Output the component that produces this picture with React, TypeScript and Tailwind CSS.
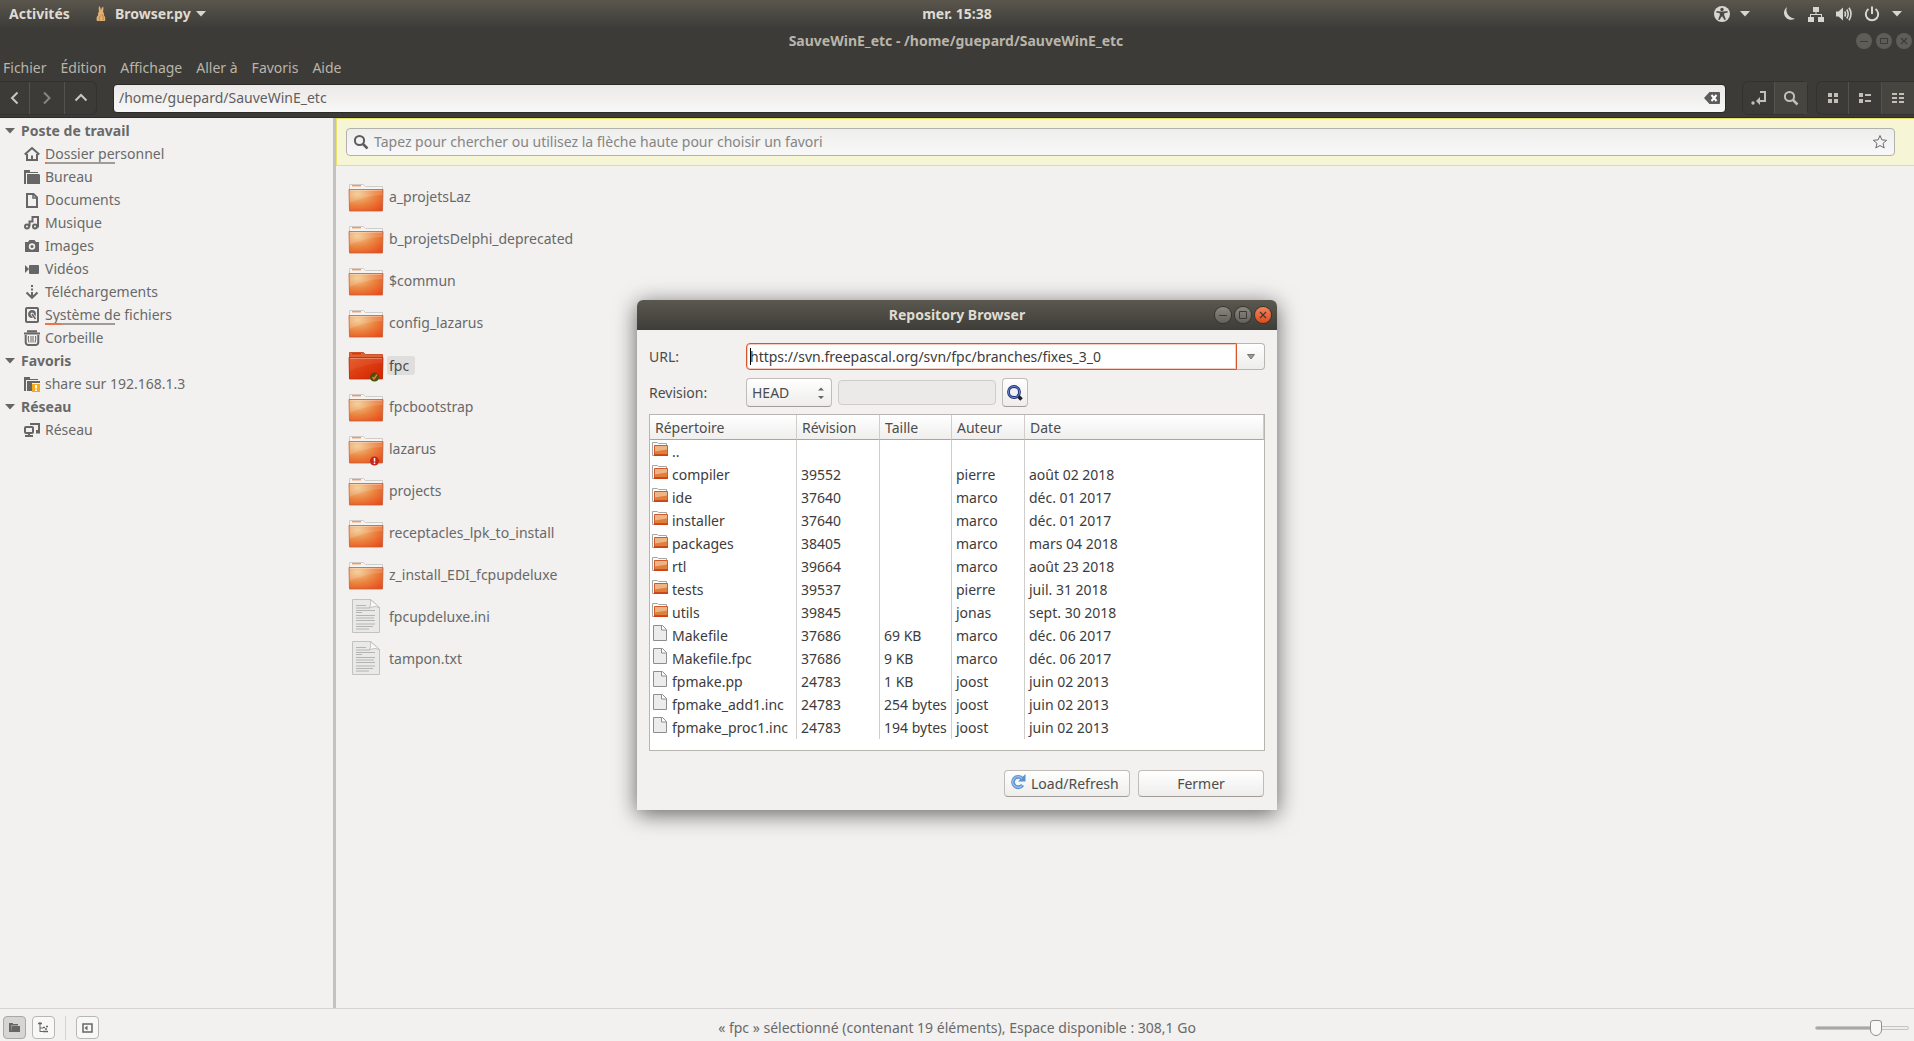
import type { ReactNode } from 'react';

interface Place {
  label: string;
  icon: ReactNode;
  // width in px of the used part of the disk bar
  used?: number;
}

interface RepoEntry {
  name: string;
  revision?: string;
  size?: string;
  author?: string;
  date?: string;
  file?: boolean;
}

const svgProps = { width: 16, height: 16, viewBox: '0 0 16 16', className: 'shrink-0' };

/* ---------- Sidebar icons ---------- */

const HomeIcon = () => (
  <svg {...svgProps} fill="none" stroke="#666" strokeWidth="2">
    <path d="M.7 8.500 8 2l7.300 6.500" />
    <path d="M3 8v6h10V8" />
    <path d="M8 14V9.500" />
  </svg>
);

const DesktopIcon = () => (
  <svg {...svgProps} fill="#666">
    <path d="M0 1h6v2h8v1H2v11H0z" />
    <path d="M3 5h12l1 1v9H3z" />
  </svg>
);

const DocumentIcon = () => (
  <svg {...svgProps} fill="none" stroke="#666" strokeWidth="2">
    <path d="M3 2h6.500L13 5.500V15H3z" />
    <path d="M9 1.500V6h4.500" strokeWidth="1.500" />
  </svg>
);

const MusicIcon = () => (
  <svg {...svgProps} fill="none" stroke="#666" strokeWidth="2">
    <circle cx="3" cy="11.500" r="2" />
    <circle cx="11" cy="11.500" r="2" />
    <path d="M5.500 11.500V6.500h3V2H14v9.500h-1" />
  </svg>
);

const CameraIcon = () => (
  <svg {...svgProps} fill="#666">
    <path d="M1 4h3l1.500-2h5L12 4h3v10H1z" />
    <circle cx="8" cy="8.500" r="3.200" fill="#f2f1f0" />
    <circle cx="8" cy="8.500" r="1.500" />
  </svg>
);

const VideoIcon = () => (
  <svg {...svgProps} fill="#666">
    <path d="M1 4v8l4-4z" />
    <rect x="5" y="4" width="10" height="9" rx="1" />
  </svg>
);

const DownloadIcon = () => (
  <svg {...svgProps} fill="none" stroke="#666" strokeWidth="2">
    <path d="M8 1v2M8 4.500v2M8 8v5" />
    <path d="M2.500 8.500 8 13.800l5.500-5.300" />
  </svg>
);

const DiskIcon = () => (
  <svg {...svgProps} fill="none" stroke="#666" strokeWidth="2">
    <rect x="2" y="1" width="12" height="14" rx="1" />
    <circle cx="8" cy="7" r="2.700" strokeWidth="2.400" />
    <path d="m8 7 3.500 5" stroke="#f2f1f0" strokeWidth="3" />
    <path d="m8 7 3.500 5" strokeWidth="1.600" />
  </svg>
);

const TrashIcon = () => (
  <svg {...svgProps} fill="none" stroke="#666" strokeWidth="1.500">
    <path d="M0 3.500h16M3 1.200h10" strokeWidth="2" />
    <path d="M1.700 5v7.500Q2 15 4.500 15h7q2.500 0 2.800-2.500V5" strokeWidth="2" />
    <path d="M4.500 6q-.8 3 .5 6.500M7 6v6.500M9 6v6.500M11.500 6q.8 3-.5 6.500" strokeWidth="1" />
  </svg>
);

const ShareIcon = () => (
  <svg {...svgProps} fill="#666">
    <path d="M0 1h6v2h8v1H2v11H0z" />
    <path d="M3 5h13v2H8v8H3z" />
    <path d="M8 8h8v8H8z" fill="#f5a91c" />
    <path d="M11 9h2v3.500h-2zM11 13.500h2V15h-2z" fill="#fff" />
  </svg>
);

const NetworkPlaceIcon = () => (
  <svg {...svgProps} fill="none" stroke="#666" strokeWidth="2">
    <path d="M7 3V2h8v7h-3" />
    <rect x="1" y="5" width="8" height="6" rx="1" />
    <path d="M1 14h8M12 10.500h4M5 11v3" />
  </svg>
);

/* ---------- Small glyphs ---------- */

const Caret = ({ color = '#d8d6d0' }: { color?: string }) => (
  <svg width="10" height="6" viewBox="0 0 10 6" className="shrink-0">
    <path d="M0 0h10L5 5.500z" fill={color} />
  </svg>
);

const RabbitIcon = () => (
  <svg width="10" height="16" viewBox="0 0 10 16">
    <path
      d="M3.300 0C4.500 1 4.800 3 5 4.500 5.300 3 5.800 1.200 7.300.8 7.700 3 7.200 4.500 7 6c1.200 1 1.200 2.200.8 3C9.200 10.500 9.700 12.500 9 15H1C0 13 .5 10.500 2.300 9 1.600 8 2 6.500 3 5.700 2.600 4 2.500 1.500 3.300 0z"
      fill="#e0b070"
    />
    <path d="M4.500 9.500q-2 2-1 5M6 8q2 3 1 6.500" stroke="#a8773a" fill="none" strokeWidth=".7" />
  </svg>
);

const AccessibilityIcon = () => (
  <svg {...svgProps}>
    <circle cx="8" cy="8" r="8" fill="#d8d6d0" />
    <circle cx="8" cy="3.500" r="1.700" fill="#4b4943" />
    <path
      d="M2.500 5 6.500 5.500h3l4-.5.200 1.400-3.500.9v2l1.700 4.200-1.400.6L8.300 10.500h-.6l-2.200 3.600-1.400-.6 1.700-4.200v-2l-3.500-.9z"
      fill="#4b4943"
    />
  </svg>
);

const MoonIcon = () => (
  <svg {...svgProps}>
    <path d="M7 1A7 7 0 1 0 15 12.500 8.500 8.500 0 0 1 7 1z" fill="#d8d6d0" />
  </svg>
);

const WiredIcon = () => (
  <svg {...svgProps} fill="#d8d6d0">
    <path d="M5 1h6v5H8.500v2H14v3h2v5h-6v-5h3V9H3v2h3v5H0v-5h2V8h5.500V6H5z" />
  </svg>
);

const VolumeIcon = () => (
  <svg {...svgProps} fill="none" stroke="#d8d6d0" strokeWidth="1.600">
    <path d="M0 5.500h2.500L7 1.500v13l-4.500-4H0z" fill="#d8d6d0" stroke="none" />
    <path d="M8.700 5.500q1.600 2.500 0 5M10.800 3.500q2.800 4.500 0 9M13 1.800q4 6.200 0 12.400" />
  </svg>
);

const PowerIcon = () => (
  <svg {...svgProps} fill="none" stroke="#d8d6d0" strokeWidth="2">
    <path d="M4.500 3a6.200 6.200 0 1 0 7 0M8 .5V8" />
  </svg>
);

const SearchGlyph = ({ color }: { color: string }) => (
  <svg {...svgProps} fill="none" stroke={color} strokeWidth="2">
    <circle cx="6.500" cy="6.500" r="4.600" />
    <path d="m10 10 4.500 4.500" strokeWidth="2.500" />
  </svg>
);

const Chevron = ({ d, dim }: { d: string; dim?: boolean }) => (
  <svg {...svgProps} fill="none" stroke={dim ? '#88867f' : '#c9c7bf'} strokeWidth="2">
    <path d={d} />
  </svg>
);

/* ---------- File icons ---------- */

function FolderIcon({ selected, emblem }: { selected?: boolean; emblem?: 'ok' | 'error' }) {
  return (
    <svg width="36" height="34" viewBox="0 -2 36 34" className="shrink-0">
      <defs>
        <radialGradient id="folder" cx=".25" cy=".2" r="1">
          <stop offset="0" stopColor="#f3c98d" />
          <stop offset=".5" stopColor="#ea8743" />
          <stop offset="1" stopColor="#ea4b17" />
        </radialGradient>
        <linearGradient id="folderSelected" x1="0" y1="0" x2="1" y2="1">
          <stop offset="0" stopColor="#e4561f" />
          <stop offset="1" stopColor="#d51f02" />
        </linearGradient>
      </defs>
      <path
        d="M1.500 28V2.500h14l2 2h17V28z"
        fill={selected ? '#dc6437' : '#f5f4f2'}
        stroke={selected ? '#cf5328' : '#cfcdca'}
      />
      <path d="M4 3.700h9" stroke={selected ? '#d4380e' : '#f09a66'} strokeWidth="1.500" />
      <path
        d="M1 7.500h34l-.5 21.500h-33z"
        fill={selected ? 'url(#folderSelected)' : 'url(#folder)'}
        stroke={selected ? '#bb2e10' : '#c8603a'}
        strokeWidth=".8"
      />
      {/* glossy highlight */}
      <path d="M1.500 8h33v5Q20 13 1.500 21z" fill="#fff" opacity={selected ? '.06' : '.14'} />
      <path d="M2 8.500h32" stroke="#fff" opacity=".3" />
      {emblem === 'ok' && (
        <>
          <circle cx="26.500" cy="27" r="4.500" fill="#47520f" />
          <path d="m24.500 27 1.500 2 3-4.500" stroke="#f07a30" strokeWidth="1.500" fill="none" />
        </>
      )}
      {emblem === 'error' && (
        <>
          <circle cx="26.500" cy="27" r="4.500" fill="#c4261b" />
          <path d="M26.500 24v3.500M26.500 28.500v1.500" stroke="#fff" strokeWidth="1.500" />
        </>
      )}
    </svg>
  );
}

const TextFileIcon = () => (
  <svg width="36" height="36" viewBox="0 1 36 36" className="shrink-0">
    <path d="M4.500 1.500h18l9 8v25h-27z" fill="#e9e9e8" stroke="#c2c2c0" />
    <path d="M22.500 1.500q1 5-1 8 6-2 10 0z" fill="#fafafa" stroke="#b5b5b3" strokeWidth=".8" />
    <path
      d="M8 7.500h10M8 10h14M8 12.500h19M8 14.500h6M8 17.500h19M8 20h18M8 22.500h19M8 26h19M8 28.500h17M8 31h13"
      stroke="#b4b4b2"
    />
  </svg>
);

const SmallFolderIcon = () => (
  <svg width="16" height="15" viewBox="0 0 16 15" className="shrink-0 mt-px">
    <path d="M.5 13.500V.5h5l1 1h8v2" fill="#fff" stroke="#a5a5a5" />
    <path d="M.5 13.500h3" stroke="#a5a5a5" />
    <path d="M2.500 3.500h13v10h-13z" fill="#e07e3c" stroke="#cf5a2a" />
    <path d="M3 4h12v3.500L3 9.500z" fill="#efb483" />
    <path d="M2 13h14" stroke="#cc3a10" strokeWidth="1.500" />
  </svg>
);

const SmallFileIcon = () => (
  <svg width="16" height="17" viewBox="0 0 16 17" className="shrink-0">
    <path d="M1.500.5h9l4 4v11h-13z" fill="#ececec" stroke="#8e8e8e" />
    <path d="M9.500.5v4.500h5" fill="#fff" stroke="#8e8e8e" />
  </svg>
);

/* ---------- Data ---------- */

const computer: Place[] = [
  { label: 'Dossier personnel', icon: <HomeIcon />, used: 2 },
  { label: 'Bureau', icon: <DesktopIcon /> },
  { label: 'Documents', icon: <DocumentIcon /> },
  { label: 'Musique', icon: <MusicIcon /> },
  { label: 'Images', icon: <CameraIcon /> },
  { label: 'Vidéos', icon: <VideoIcon /> },
  { label: 'Téléchargements', icon: <DownloadIcon /> },
  { label: 'Système de fichiers', icon: <DiskIcon />, used: 16 },
  { label: 'Corbeille', icon: <TrashIcon /> },
];

const folders = [
  'a_projetsLaz',
  'b_projetsDelphi_deprecated',
  '$commun',
  'config_lazarus',
  'fpc',
  'fpcbootstrap',
  'lazarus',
  'projects',
  'receptacles_lpk_to_install',
  'z_install_EDI_fcpupdeluxe',
];

const entries: RepoEntry[] = [
  { name: '..' },
  { name: 'compiler', revision: '39552', author: 'pierre', date: 'août 02 2018' },
  { name: 'ide', revision: '37640', author: 'marco', date: 'déc. 01 2017' },
  { name: 'installer', revision: '37640', author: 'marco', date: 'déc. 01 2017' },
  { name: 'packages', revision: '38405', author: 'marco', date: 'mars 04 2018' },
  { name: 'rtl', revision: '39664', author: 'marco', date: 'août 23 2018' },
  { name: 'tests', revision: '39537', author: 'pierre', date: 'juil. 31 2018' },
  { name: 'utils', revision: '39845', author: 'jonas', date: 'sept. 30 2018' },
  { name: 'Makefile', revision: '37686', size: '69 KB', author: 'marco', date: 'déc. 06 2017', file: true },
  { name: 'Makefile.fpc', revision: '37686', size: '9 KB', author: 'marco', date: 'déc. 06 2017', file: true },
  { name: 'fpmake.pp', revision: '24783', size: '1 KB', author: 'joost', date: 'juin 02 2013', file: true },
  { name: 'fpmake_add1.inc', revision: '24783', size: '254 bytes', author: 'joost', date: 'juin 02 2013', file: true },
  { name: 'fpmake_proc1.inc', revision: '24783', size: '194 bytes', author: 'joost', date: 'juin 02 2013', file: true },
];

/* ---------- Sections ---------- */

function TopPanel() {
  return (
    <header className="grid grid-cols-3 items-center h-[27px] bg-linear-to-b from-[#5a564d] to-[#3e3d39] text-[#dfdbd2] font-bold">
      <div className="flex items-center">
        <button className="pl-[9px] w-24 text-left">Activités</button>
        <button className="flex items-center gap-[5px]">
          <RabbitIcon />
          <span className="pl-1">Browser.py</span>
          <Caret />
        </button>
      </div>
      <button className="justify-self-center">mer. 15:38</button>
      <div className="flex items-center justify-end pr-3">
        <button aria-label="Accessibilité" className="flex items-center gap-2.5 mr-[30px]">
          <AccessibilityIcon />
          <Caret />
        </button>
        <button aria-label="Système" className="flex items-center gap-3">
          <MoonIcon />
          <WiredIcon />
          <VolumeIcon />
          <PowerIcon />
          <Caret />
        </button>
      </div>
    </header>
  );
}

function WindowButtons({ active }: { active?: boolean }) {
  const plain = active
    ? 'size-4 rounded-full bg-linear-to-b from-[#8a877f] to-[#64625b] ring-1 ring-[#35342f]'
    : 'size-4 rounded-full bg-[#5f5d57]';
  const close = active
    ? 'size-4 rounded-full bg-linear-to-b from-[#f5825a] to-[#df4a17] ring-1 ring-[#35342f]'
    : plain;
  return (
    <div className="flex gap-1">
      <button aria-label="Réduire" className={plain}>
        <svg width="16" height="16" viewBox="0 0 16 16"><path d="M4 8.500h8" stroke="#3c3b37" /></svg>
      </button>
      <button aria-label="Agrandir" className={plain}>
        <svg width="16" height="16" viewBox="0 0 16 16">
          <path d={active ? 'M4.500 4.500h7v7h-7z' : 'M4.500 5.500h7v5h-7z'} stroke="#3c3b37" fill="none" />
        </svg>
      </button>
      <button aria-label="Fermer la fenêtre" className={close}>
        <svg width="16" height="16" viewBox="0 0 16 16"><path d="m5 5 6 6M11 5l-6 6" stroke="#3c3b37" strokeWidth="1.200" /></svg>
      </button>
    </div>
  );
}

function Toolbar() {
  const button = 'flex items-center justify-center w-[33px]';
  return (
    <div className="flex items-center h-9 pb-0.5">
      <div className="flex rounded-r-md border border-l-0 border-[#33322e] h-[34px] divide-x divide-[#55534d]">
        <button aria-label="Précédent" className="flex items-center justify-center w-[30px]"><Chevron d="M10.500 2.500 5 8l5.500 5.500" /></button>
        <button aria-label="Suivant" className="flex items-center justify-center w-[35px]"><Chevron d="M5 2.500 10.500 8 5 13.500" dim /></button>
        <button aria-label="Dossier parent" className="flex items-center justify-center w-[31px]"><Chevron d="M2.500 10.500 8 5l5.500 5.500" /></button>
      </div>
      <div className="flex flex-1 items-center mx-4 h-[29px] rounded-[4px] border border-[#2b2a27] bg-linear-to-b from-[#eceae8] to-[#f7f7f7] pl-[5px] pr-[5px]">
        <input
          aria-label="Emplacement"
          className="flex-1 text-[#5f5f5f] outline-none"
          defaultValue="/home/guepard/SauveWinE_etc"
        />
        <button aria-label="Effacer">
          <svg width="16" height="14" viewBox="0 0 16 14">
            <path d="M5.500 1H15q1 0 1 1v10q0 1-1 1H5.500L0 7z" fill="#5c5c5c" />
            <path d="m7.500 4 5 6M12.500 4l-5 6" stroke="#fff" strokeWidth="2" />
          </svg>
        </button>
      </div>
      <div className="flex rounded-md border border-[#33322e] h-[34px] divide-x divide-[#55534d]">
        <button aria-label="Saisir le chemin" className="flex items-center justify-center w-8">
          <svg {...svgProps} fill="none" stroke="#c2c0b6" strokeWidth="2">
            <path d="M9 2h5v9H8" />
            <path d="M9 7v8l-4-4z" fill="#c2c0b6" stroke="none" />
            <circle cx="2" cy="13" r="1.700" fill="#c2c0b6" stroke="none" />
          </svg>
        </button>
        <button aria-label="Rechercher" className="flex items-center justify-center w-8 bg-[#464540]">
          <SearchGlyph color="#c2c0b6" />
        </button>
      </div>
      <div className="flex rounded-l-md border border-r-0 border-[#33322e] h-[34px] divide-x divide-[#55534d] ml-2">
        <button aria-label="Icônes" className="flex items-center justify-center w-8">
          <svg {...svgProps} fill="#c2c0b6"><path d="M3 3h4v4H3zM9 3h4v4H9zM3 9h4v4H3zM9 9h4v4H9z" /></svg>
        </button>
        <button aria-label="Liste" className={button}>
          <svg {...svgProps} fill="#c2c0b6"><path d="M2 3h4v4H2zM8 4h6v2H8zM2 9h4v4H2zM8 10h6v2H8z" /></svg>
        </button>
        <button aria-label="Liste compacte" className="flex items-center justify-center w-8 bg-[#464540]">
          <svg {...svgProps} fill="#c2c0b6">
            <path d="M2 3h5v2H2zM9 3h5v2H9zM2 7h5v2H2zM9 7h5v2H9zM2 11h5v2H2zM9 11h5v2H9z" />
          </svg>
        </button>
      </div>
    </div>
  );
}

function SidebarGroup({ title, places }: { title: string; places: Place[] }) {
  return (
    <section>
      <h2 className="flex items-center h-[23px] pl-[5px] gap-[6px] font-bold">
        <Caret color="#666" />
        {title}
      </h2>
      <ul>
        {places.map((place) => (
          <li key={place.label}>
            <a href="#" className="flex items-center h-[23px] pl-6 gap-[5px]">
              {place.icon}
              <span className="relative">
                {place.label}
                {place.used !== undefined && (
                  <span className="absolute left-0 bottom-0 w-[70px] h-0.5 bg-[#9f9b97]">
                    <span className="block h-full bg-[#ee7442]" style={{ width: place.used }} />
                  </span>
                )}
              </span>
            </a>
          </li>
        ))}
      </ul>
    </section>
  );
}

function FileView() {
  return (
    <main className="flex-1 flex flex-col">
      <div className="bg-[#f6f5d5] border border-r-0 border-[#e6e26a] pl-[9px] pr-[19px] py-[9px]">
        <div className="flex items-center h-7 rounded-[4px] border border-[#b3b1ae] bg-linear-to-b from-[#eeeeed] to-[#f8f8f8] px-1.5 gap-[5px]">
          <SearchGlyph color="#5c5c5c" />
          <input
            aria-label="Rechercher"
            className="flex-1 outline-none placeholder:text-[#858585]"
            placeholder="Tapez pour chercher ou utilisez la flèche haute pour choisir un favori"
          />
          <button aria-label="Favoris">
            <svg width="16" height="16" viewBox="0 0 16 16">
              <path d="m8 1.500 1.900 4.400 4.700.4-3.600 3.100 1.200 4.600L8 11.500 3.800 14 5 9.400 1.400 6.300l4.700-.4z" fill="none" stroke="#6b6b6b" />
            </svg>
          </button>
        </div>
      </div>
      <ul className="pl-3 pt-[10px]">
        {folders.map((name) => (
          <li key={name} className="flex items-center h-[42px] gap-[5px]">
            <FolderIcon
              selected={name === 'fpc'}
              emblem={name === 'fpc' ? 'ok' : name === 'lazarus' ? 'error' : undefined}
            />
            <span className={name === 'fpc' ? 'bg-[#dfdedc] text-[#4c4c4c] rounded-[3px] -ml-0.5 pl-0.5 pr-1.5 leading-[19px]' : ''}>{name}</span>
          </li>
        ))}
        {['fpcupdeluxe.ini', 'tampon.txt'].map((name) => (
          <li key={name} className="flex items-center h-[42px] gap-[5px]">
            <TextFileIcon />
            {name}
          </li>
        ))}
      </ul>
    </main>
  );
}

function StatusBar() {
  const button = 'flex items-center justify-center size-[23px] rounded-[4px] border border-[#b9b7b4] bg-[#f8f8f7]';
  return (
    <footer className="grid grid-cols-[1fr_auto_1fr] items-center h-[33px] border-t border-[#d5d3d1] pt-[5px]">
      <div className="flex items-center pl-[3px]">
        <button aria-label="Emplacements" className="flex items-center justify-center size-[23px] rounded-[4px] border border-[#aaa8a5] bg-[#d6d5d3] mr-1.5">
          <svg width="11" height="10" viewBox="0 0 11 10" fill="#666"><path d="M0 0h4v1h5v1.500H2V9H0z" /><path d="M2.500 3H11v6H2z" /></svg>
        </button>
        <button aria-label="Arborescence" className={button}>
          <svg width="11" height="11" viewBox="0 0 11 11" fill="none" stroke="#666">
            <path d="M2 0v10M2 6h3M2 9.500h3" />
            <path d="M0 1.500h4M5 5.500h2M5 9.500h5M8 4.500h2M7 7h2" strokeWidth="1.500" />
          </svg>
        </button>
        <span className="w-px h-6 bg-[#d5d3d1] mx-2.5" />
        <button aria-label="Masquer le panneau latéral" className={button}>
          <svg width="11" height="10" viewBox="0 0 11 10">
            <path d="M1 1h9v8H1z" fill="none" stroke="#666" strokeWidth="1.500" />
            <path d="M5.500 2.500v5L2.500 5z" fill="#666" />
          </svg>
        </button>
      </div>
      <p>« fpc » sélectionné (contenant 19 éléments), Espace disponible : 308,1 Go</p>
      <input
        type="range"
        aria-label="Zoom"
        min={0}
        max={100}
        defaultValue={67}
        className="justify-self-end mr-[5px] w-[94px] h-4 appearance-none [&::-webkit-slider-runnable-track]:h-1 [&::-webkit-slider-runnable-track]:rounded-sm [&::-webkit-slider-runnable-track]:border [&::-webkit-slider-runnable-track]:border-[#c6c4c2] [&::-webkit-slider-runnable-track]:bg-[linear-gradient(to_right,#a9a7a5_62%,#ededec_62%)] [&::-webkit-slider-thumb]:appearance-none [&::-webkit-slider-thumb]:w-3 [&::-webkit-slider-thumb]:h-4 [&::-webkit-slider-thumb]:-mt-[7px] [&::-webkit-slider-thumb]:rounded-t-[3px] [&::-webkit-slider-thumb]:rounded-b-[6px] [&::-webkit-slider-thumb]:border [&::-webkit-slider-thumb]:border-[#8f8f8f] [&::-webkit-slider-thumb]:bg-[#f8f8f8]"
      />
    </footer>
  );
}

function RepositoryBrowser() {
  const raised = 'rounded-[4px] border border-[#c0bdb9] border-b-[#a09d99] bg-linear-to-b from-white to-[#eeedec]';
  const head = 'font-normal text-left pl-[5px] pt-px border-r border-[#d0cecb]';
  const cell = 'pl-1 border-r border-[#d0cecb]';
  return (
    <div
      role="dialog"
      aria-label="Repository Browser"
      className="absolute left-1/2 top-[300px] -translate-x-1/2 w-[640px] rounded-t-md bg-[#f2f1f0] text-[#4c4c4c] shadow-[0_4px_22px_rgba(0,0,0,0.6)]"
    >
      {/* Title bar */}
      <div className="grid grid-cols-[1fr_auto_1fr] items-center h-[30px] rounded-t-md bg-linear-to-b from-[#5a584f] to-[#3e3d38] px-1.5 text-[#dfdbd2] font-bold">
        <span />
        <h1>Repository Browser</h1>
        <div className="justify-self-end"><WindowButtons active /></div>
      </div>

      <div className="px-3 pt-[13px] pb-[13px]">
        {/* URL */}
        <div className="flex items-center">
          <label htmlFor="url" className="w-[97px]">URL:</label>
          <div className="relative flex flex-1">
            <input
              id="url"
              className="flex-1 h-[27px] rounded-l-[4px] border border-[#d4572b] bg-white pl-[3px] text-[#3c3c3c] outline-none shadow-[inset_0_0_0_1px_#f6cdbd]"
              defaultValue="https://svn.freepascal.org/svn/fpc/branches/fixes_3_0"
            />
            <span className="absolute left-1 top-[5px] w-px h-[17px] bg-black" />
          </div>
          <button aria-label="Historique des URL" className="flex items-center justify-center w-[28px] h-[27px] rounded-r-[4px] border border-l-0 border-[#b9b6b2] bg-linear-to-b from-white to-[#eeedec]">
            <svg width="8" height="6" viewBox="0 0 8 6"><path d="M.5.500h7L4 5z" fill="#999" stroke="#777" /></svg>
          </button>
        </div>

        {/* Revision */}
        <div className="flex items-center mt-2 mb-[7px]">
          <label htmlFor="revision" className="w-[97px]">Revision:</label>
          <div className="relative">
            <select id="revision" className="appearance-none w-[86px] h-[29px] pl-[5px] rounded-[4px] border border-[#c0bdb9] border-b-[#a09d99] bg-linear-to-b from-white to-[#eeedec] outline-none">
              <option>HEAD</option>
            </select>
            <svg width="6" height="12" viewBox="0 0 6 12" className="absolute right-2 top-[9px] pointer-events-none">
              <path d="M0 3.500 3 .5l3 3zM0 9l3 3 3-3z" fill="#666" />
            </svg>
          </div>
          <input aria-label="Numéro de révision" disabled className="ml-1.5 w-[158px] h-[25px] rounded-[4px] border border-[#cfcdca] bg-[#ebeae9]" />
          <button aria-label="Chercher la révision" className="ml-1.5 flex items-center justify-center w-[26px] h-[29px] rounded-[4px] border border-[#c0bdb9] border-b-[#a09d99] bg-linear-to-b from-white to-[#eeedec]">
            <svg {...svgProps} fill="none">
              <path d="m11 11 3.500 3.500" stroke="#1d1d1d" strokeWidth="3.500" />
              <circle cx="7" cy="7" r="5.500" stroke="#22337a" strokeWidth="2.800" fill="#eef0f4" />
              <circle cx="7" cy="7" r="5.600" stroke="#6b86d0" strokeWidth="1" />
            </svg>
          </button>
        </div>

        {/* Directory listing */}
        <div className="border border-[#b8b5b1] bg-white pb-[11px]">
          <table className="w-full table-fixed border-separate border-spacing-0">
            <colgroup>
              <col className="w-[147px]" />
              <col className="w-[83px]" />
              <col className="w-[72px]" />
              <col className="w-[73px]" />
              <col />
            </colgroup>
            <thead>
              <tr className="h-[25px] bg-linear-to-b from-white to-[#efeeed] [&>th]:border-b [&>th]:border-b-[#a9a6a2]">
                <th className={head}>Répertoire</th>
                <th className={head}>Révision</th>
                <th className={head}>Taille</th>
                <th className={head}>Auteur</th>
                <th className={head}>Date</th>
              </tr>
            </thead>
            <tbody className="text-[#3c3c3c] whitespace-nowrap">
              {entries.map((entry) => (
                <tr key={entry.name} className="h-[23px]">
                  <td className="pl-0.5 border-r border-[#d0cecb]">
                    <span className="flex items-start gap-1 h-[21px]">
                      {entry.file ? <SmallFileIcon /> : <SmallFolderIcon />}
                      <span className="leading-[21px]">{entry.name}</span>
                    </span>
                  </td>
                  <td className={cell}>{entry.revision}</td>
                  <td className={cell}>{entry.size}</td>
                  <td className={cell}>{entry.author}</td>
                  <td className="pl-1">{entry.date}</td>
                </tr>
              ))}
            </tbody>
          </table>
        </div>

        {/* Actions */}
        <div className="flex justify-end gap-2 mt-[19px] pr-px">
          <button className={`${raised} flex items-center gap-[5px] pl-[5px] w-[126px] h-[27px]`}>
            <svg width="16" height="16" viewBox="0 0 16 16" className="shrink-0 mb-1" fill="none">
              <path d="M12 4.500A5.200 5.200 0 1 0 12.500 11" stroke="#5a92cf" strokeWidth="3.800" />
              <path d="M15.500 0v7.500H8z" fill="#5a92cf" />
              <path d="M12 4.500A5.300 5.300 0 1 0 12 11.500" stroke="#9cc1e8" strokeWidth="1.300" />
            </svg>
            Load/Refresh
          </button>
          <button className={`${raised} w-[126px] h-[27px]`}>Fermer</button>
        </div>
      </div>
    </div>
  );
}

export default function App() {
  return (
    <div className="relative flex flex-col min-h-screen bg-[#f2f1f0] text-[#696969] text-[14px] leading-5 font-['Noto_Sans','Open_Sans',sans-serif]">
      <TopPanel />

      <div className="bg-[#3c3b37] border-b border-[#2c2b28] text-[#b9b5aa]">
        <div className="grid grid-cols-[1fr_auto_1fr] items-center h-[27px] pr-0.5">
          <span />
          <h1 className="font-bold">SauveWinE_etc - /home/guepard/SauveWinE_etc</h1>
          <div className="justify-self-end"><WindowButtons /></div>
        </div>
        <nav className="flex gap-3.5 pl-[3px] h-[27px] items-center">
          <button>Fichier</button>
          <button>Édition</button>
          <button>Affichage</button>
          <button>Aller à</button>
          <button>Favoris</button>
          <button>Aide</button>
        </nav>
        <Toolbar />
      </div>

      <div className="flex flex-1">
        <aside className="w-[336px] border-r-[3px] border-[#c4c2c0] pt-px">
          <SidebarGroup title="Poste de travail" places={computer} />
          <SidebarGroup title="Favoris" places={[{ label: 'share sur 192.168.1.3', icon: <ShareIcon /> }]} />
          <SidebarGroup title="Réseau" places={[{ label: 'Réseau', icon: <NetworkPlaceIcon /> }]} />
        </aside>
        <FileView />
      </div>

      <StatusBar />
      <RepositoryBrowser />
    </div>
  );
}
